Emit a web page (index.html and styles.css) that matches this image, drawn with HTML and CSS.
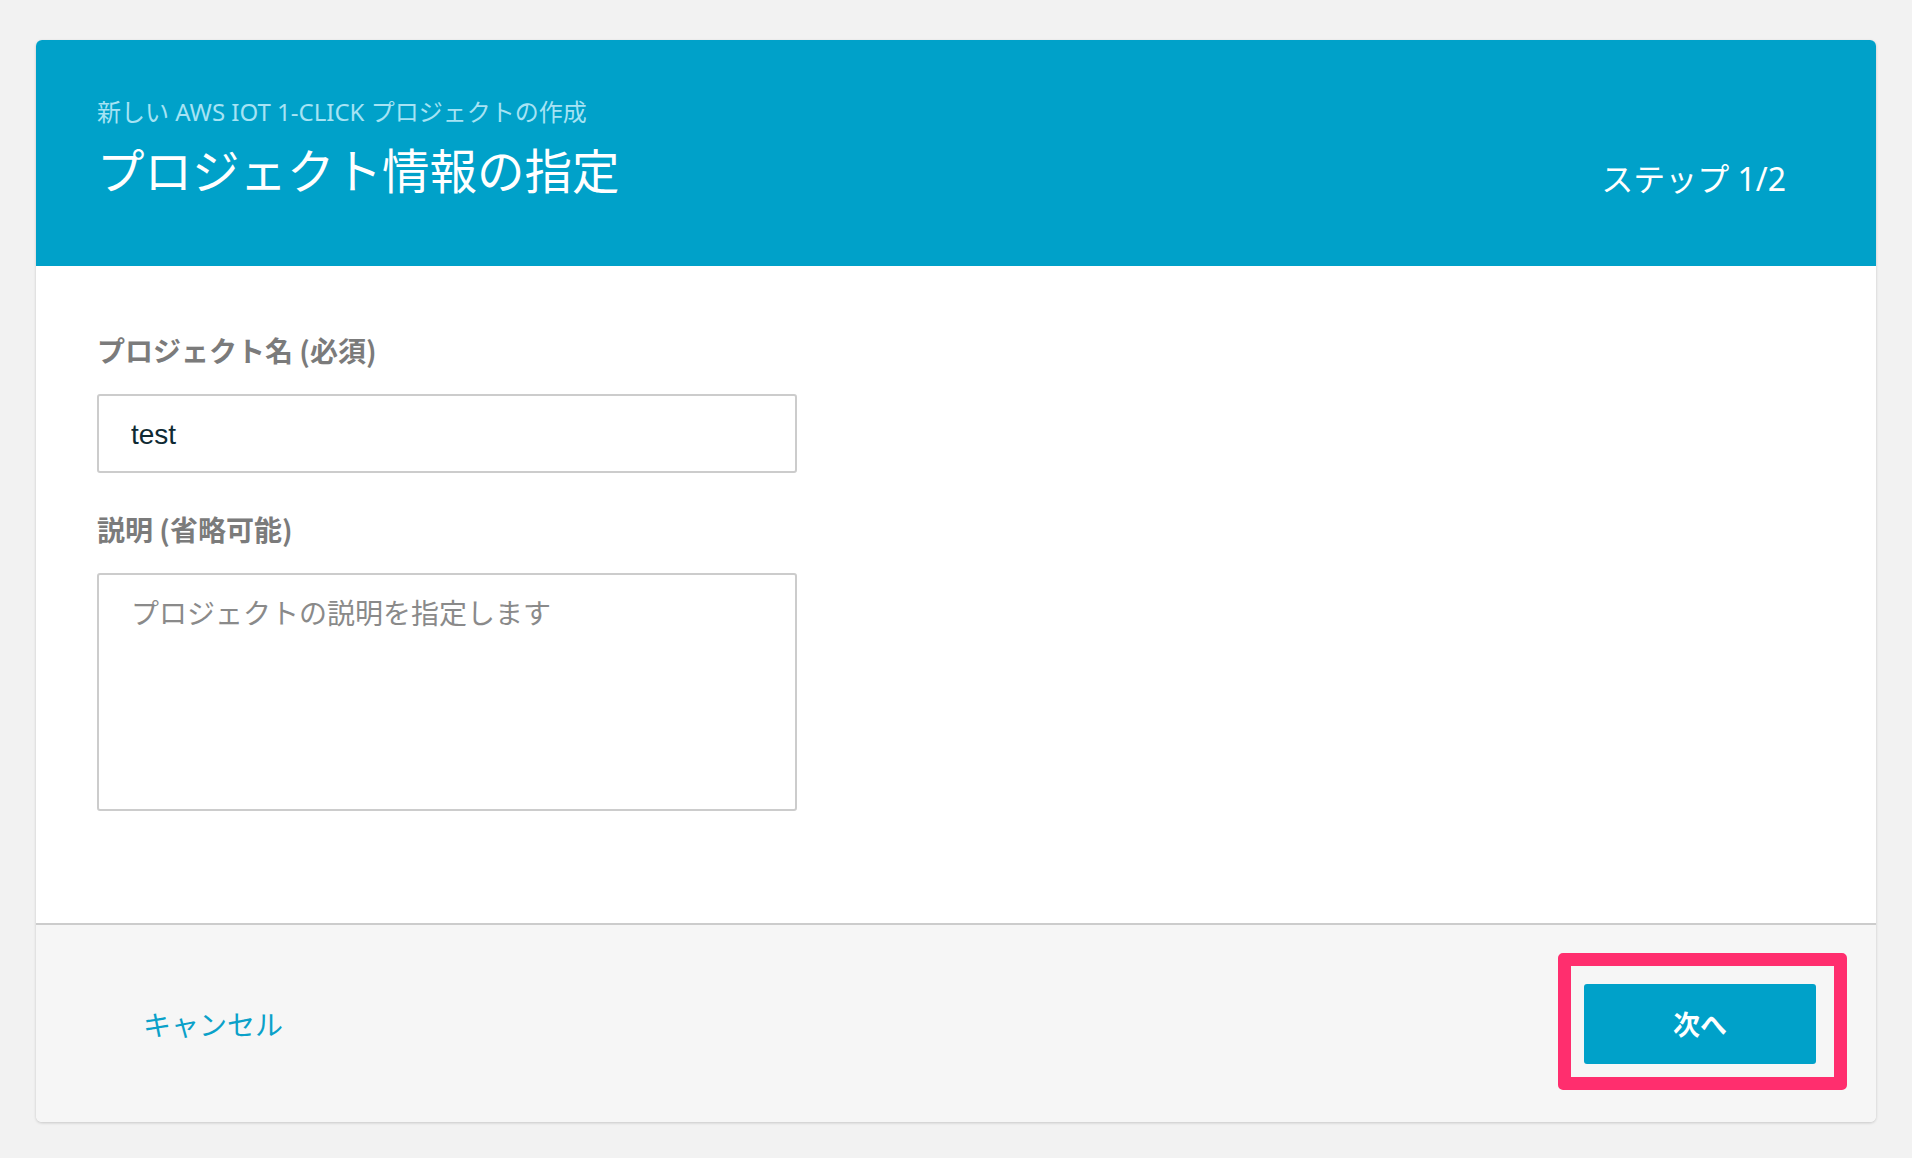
FILE: index.html
```html
<!DOCTYPE html>
<html lang="ja">
<head>
<meta charset="utf-8">
<title>プロジェクト情報の指定</title>
<link rel="stylesheet" href="styles.css">
</head>
<body>
<div class="card">
  <header class="card-header">
    <div class="titles">
      <div class="subtitle">新しい AWS IOT 1-CLICK プロジェクトの作成</div>
      <h1 class="title">プロジェクト情報の指定</h1>
    </div>
    <div class="step">ステップ 1/2</div>
  </header>
  <main class="card-body">
    <label class="label" for="name">プロジェクト名 (必須)</label>
    <input class="input" id="name" type="text" value="test">
    <label class="label" for="desc">説明 (省略可能)</label>
    <textarea class="textarea" id="desc" placeholder="プロジェクトの説明を指定します"></textarea>
  </main>
  <footer class="card-footer">
    <button class="btn-link" type="button">キャンセル</button>
    <span class="highlight">
      <button class="btn-primary" type="button">次へ</button>
    </span>
  </footer>
</div>
</body>
</html>
```

FILE: styles.css
```css
* { box-sizing: border-box; }

html, body {
  margin: 0;
  padding: 0;
}

body {
  background: #f2f2f2;
  padding: 40px 36px 36px;
  font-family: "Noto Sans", "Noto Sans CJK JP", sans-serif;
}

.card {
  background: #ffffff;
  border-radius: 6px;
  overflow: hidden;
  box-shadow: 0 1px 3px rgba(0, 0, 0, 0.18);
}

.card-header {
  background: #00a1c9;
  height: 226px;
  padding: 56px 90px 0 61px;
  display: flex;
  justify-content: space-between;
  align-items: flex-start;
}

.subtitle {
  color: #a6e3f4;
  font-size: 24px;
  line-height: 32px;
}

.title {
  margin: 12px 0 0;
  color: #ffffff;
  font-weight: 400;
  font-size: 47.5px;
  line-height: 58px;
  font-family: "Noto Sans CJK JP", sans-serif;
}

.step {
  margin-top: 62px;
  color: #ffffff;
  font-size: 32px;
  line-height: 42px;
  font-family: "Noto Sans", "Noto Sans CJK JP", sans-serif;
}

.card-body {
  padding: 66px 61px 112px;
  display: flex;
  flex-direction: column;
  align-items: flex-start;
}

.label {
  color: #7b7b7b;
  font-weight: 700;
  font-size: 28px;
  line-height: 36px;
  margin-bottom: 26px;
  font-family: "Noto Sans CJK JP", sans-serif;
}

.input,
.textarea {
  width: 700px;
  border: 2px solid #cccccc;
  border-radius: 3px;
  background: #ffffff;
  font-size: 28px;
  color: #0f2a33;
  padding: 0 32px;
  outline: none;
  font-family: "Liberation Sans", "Noto Sans CJK JP", sans-serif;
}

.input {
  height: 79px;
  padding-top: 3px;
  margin-bottom: 38px;
}

.textarea {
  height: 238px;
  padding-top: 17px;
  line-height: 40px;
  resize: none;
  font-family: "Noto Sans CJK JP", sans-serif;
}

.textarea::placeholder {
  color: #8a8a8a;
}

.card-footer {
  background: #f6f6f6;
  border-top: 2px solid #cccccc;
  height: 199px;
  padding: 0 60px;
  display: flex;
  justify-content: space-between;
  align-items: center;
}

.btn-link {
  background: none;
  border: none;
  padding: 0 47px;
  color: #0aa1c9;
  font-size: 28px;
  line-height: 40px;
  font-family: "Noto Sans CJK JP", sans-serif;
  cursor: pointer;
}

.highlight {
  position: relative;
  display: inline-flex;
}

.highlight::after {
  content: "";
  position: absolute;
  top: -31px;
  left: -26px;
  right: -31px;
  bottom: -26px;
  border: 13px solid #ff2e6e;
  border-radius: 5px;
  pointer-events: none;
}

.btn-primary {
  width: 232px;
  height: 80px;
  border: none;
  border-radius: 3px;
  background: #00a1c9;
  color: #ffffff;
  font-weight: 700;
  font-size: 27px;
  font-family: "Noto Sans CJK JP", sans-serif;
  cursor: pointer;
}
```
